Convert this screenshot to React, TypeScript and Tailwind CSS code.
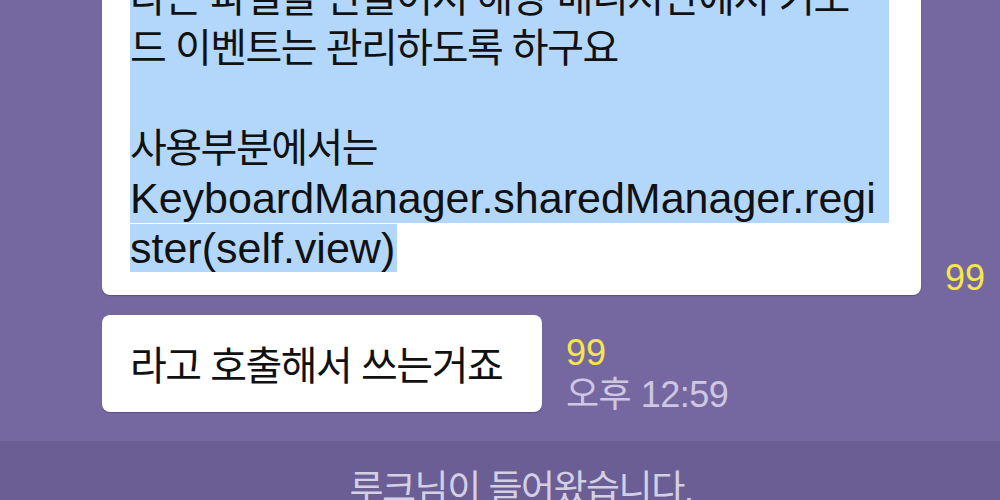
import React from 'react';

const FONT = { fontFamily: '"Liberation Sans", "Noto Sans CJK KR", sans-serif' };

// 한글 줄은 글자폭을 줄여서 원본(맥 폰트)과 맞춘다
const firstBubbleLines = [
  { text: '라는 파일을 만들어서 해당 매니저안에서 키보', ko: true },
  { text: '드 이벤트는 관리하도록 하구요', ko: true },
  { text: '', ko: true },
  { text: '사용부분에서는', ko: true },
  { text: 'KeyboardManager.sharedManager.regi', ko: false },
];

const App: React.FC = () => {
  return (
    <div className="w-[1000px] h-[500px] overflow-hidden bg-[#7568a0] flex flex-col" style={FONT}>
      {/* 선택된 긴 메시지 */}
      <div className="flex items-end -mt-[49px] pl-[102px]">
        <div className="w-[819px] bg-white rounded-lg shadow-[0_1px_1px_rgba(40,30,80,0.35)] pl-[28px] pr-[32px] py-[22px]">
          <div className="leading-[50px] text-[#111]">
            {firstBubbleLines.map((line, i) => (
              <div
                key={i}
                className={`h-[50px] whitespace-nowrap bg-[#b3d7fb] ${
                  line.ko ? 'text-[40px] tracking-[-1.5px]' : 'text-[43px]'
                }`}
              >
                {line.text}
              </div>
            ))}
            <div className="h-[50px] whitespace-nowrap text-[43px]">
              <span className="bg-[#b3d7fb] pr-[2px]">ster(self.view)</span>
            </div>
          </div>
        </div>
        <div className="ml-[24px] -mb-[3px] text-[36px] leading-[40px] text-[#f5e64a]">99</div>
      </div>

      {/* 두번째 메시지 */}
      <div className="flex items-end mt-[20px] pl-[102px]">
        <div className="w-[440px] h-[97px] bg-white rounded-lg shadow-[0_1px_1px_rgba(40,30,80,0.35)] pl-[28px] pt-[5px] flex items-center">
          <span className="text-[40px] tracking-[-1.5px] leading-[50px] text-[#111] whitespace-nowrap">
            라고 호출해서 쓰는거죠
          </span>
        </div>
        <div className="ml-[24px] -mb-[4px] flex flex-col text-[36px] leading-[42px]">
          <span className="text-[#f5e64a]">99</span>
          <span className="text-[#cdc7e2] whitespace-nowrap tracking-[-0.5px]">오후 12:59</span>
        </div>
      </div>

      {/* 입장 알림 */}
      <div className="mt-[29px] flex-1 bg-[#6a5e95] flex justify-center pl-[42px] pt-[25px]">
        <span className="text-[37px] tracking-[-1.5px] leading-[48px] text-[#d4d0e4] whitespace-nowrap">
          루크님이 들어왔습니다.
        </span>
      </div>
    </div>
  );
};

export default App;
